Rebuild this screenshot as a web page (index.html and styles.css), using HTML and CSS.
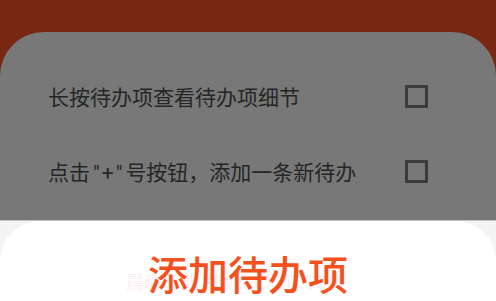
FILE: index.html
```html
<!DOCTYPE html>
<html lang="zh">
<head>
<meta charset="utf-8">
<link rel="stylesheet" href="styles.css">
</head>
<body>
<div class="screen">
  <div class="topbar"></div>
  <div class="sheet">
    <div class="row">
      <span class="label">长按待办项查看待办项细节</span>
      <span class="check"></span>
    </div>
    <div class="row">
      <span class="label">点击<span class="latin">"+"</span>号按钮，添加一条新待办</span>
      <span class="check"></span>
    </div>
  </div>
  <div class="divider"></div>
  <div class="dialog-wrap">
    <div class="dialog">
      <div class="title-box">
        <span class="watermark">晨曦下载 WWW.CXZD.COM</span>
        <h1 class="title">添加待办项</h1>
      </div>
    </div>
  </div>
</div>
</body>
</html>
```

FILE: styles.css
```css
* { box-sizing: border-box; }
html, body { margin: 0; padding: 0; }
body {
  width: 496px;
  height: 301px;
  overflow: hidden;
  background: #782812;
  font-family: "Noto Sans CJK SC", "Noto Sans", sans-serif;
}
.screen { display: flex; flex-direction: column; height: 301px; }
.topbar { height: 32px; background: #782812; flex: none; }
.sheet {
  flex: none;
  height: 188px;
  background: #787878;
  border-radius: 44px 44px 0 0;
  padding: 42px 68px 0 48px;
  display: flex;
  flex-direction: column;
  gap: 31px;
}
.row {
  height: 44px;
  display: flex;
  align-items: center;
  justify-content: space-between;
}
.label {
  font-size: 21px;
  color: #262626;
  white-space: nowrap;
}
.latin {
  font-family: "Roboto", "Liberation Sans", sans-serif;
  padding: 0 1px 0 3px;
  letter-spacing: 2px;
}
.check {
  width: 23px;
  height: 23px;
  border: 3px solid #3b3b3b;
  border-radius: 1px;
  flex: none;
}
.divider { height: 1px; background: #c4c4c4; flex: none; }
.dialog-wrap { flex: 1; background: #f4f4f4; }
.dialog {
  height: 100%;
  background: #ffffff;
  border-radius: 40px 40px 0 0;
  display: flex;
  justify-content: center;
  padding-top: 27px;
}
.title-box { position: relative; }
.title {
  margin: 0;
  font-size: 40px;
  line-height: 50px;
  font-weight: 500;
  color: #f4511e;
  position: relative;
  z-index: 1;
}
.watermark {
  position: absolute;
  left: -22px;
  top: 20px;
  font-size: 18px;
  color: #fdeef4;
  white-space: nowrap;
  font-family: "Noto Sans CJK SC", "Liberation Sans", sans-serif;
}
```
